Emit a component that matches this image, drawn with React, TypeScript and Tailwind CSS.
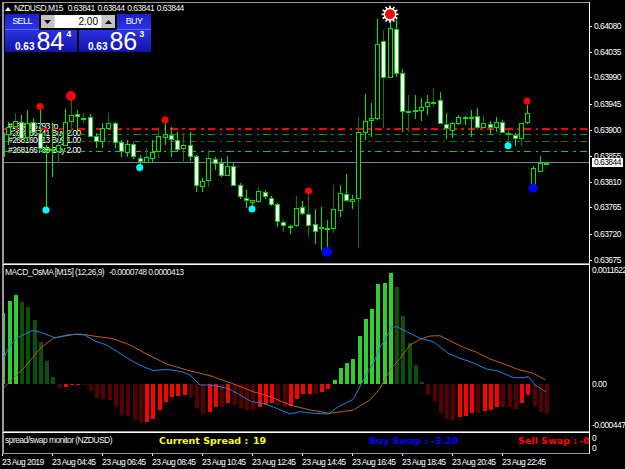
import React from "react";

type C = [number, number, number, number, number, number];
// high, low, bodyTop, bodyBottom, white body, dark wick (units: zoomed px)
const A: C[] = [
  [65,205,130,200,0,0],[95,165,110,135,0,0],[68,140,92,112,0,1],[75,150,95,148,1,0],[60,148,98,145,0,0],[85,130,95,128,1,0],
  [60,180,130,178,1,0],[165,350,175,183,1,0],[100,262,178,182,0,0],[135,220,166,185,0,1],[58,168,95,167,0,0],[30,125,76,95,0,1],
  [60,130,72,82,1,0],[68,100,84,87,0,1],[72,140,82,140,1,0],[130,175,137,155,1,0],[100,175,115,155,0,0],[68,118,100,117,0,1],
  [95,175,100,158,1,0],[150,200,155,187,1,0],[150,200,162,188,0,0],[160,208,163,200,1,0],[195,225,205,217,1,0],[175,220,202,218,0,1],
  [150,218,187,207,0,0],[110,205,138,187,0,1],[100,165,133,143,0,0],[112,200,135,150,1,0],[125,185,150,180,1,0],[130,220,165,178,0,1],
  [125,213,166,200,1,0],[195,307,198,287,1,0],[265,305,273,290,0,0],[180,290,205,273,0,1],
  [200,240,207,222,1,0],[205,262,220,258,1,0],[197,258,228,257,0,0],[215,288,228,287,1,0],[280,328,286,322,1,0],[300,353,325,334,1,0],
  [331,350,331,338,0,0],[292,338,304,335,0,1],[300,328,305,320,1,0],[318,348,324,344,1,0],[340,412,342,397,1,0],[390,425,397,407,1,1],
  [405,432,407,410,0,0],[318,410,353,407,0,1],[333,375,352,373,1,0],[305,440,373,407,1,1],[358,462,403,425,1,0],[350,480,411,418,1,0],
  [390,475,415,418,0,0],[285,430,358,418,0,1],[285,380,310,362,0,0],[252,336,313,334,1,0],[316,356,326,337,0,0],[82,473,127,327,0,1],
  [12,150,92,128,0,0],[40,140,85,94,0,0],
];
const B: C[] = [
  [58,360,132,357,0,0],[90,385,122,233,1,1],[40,235,85,233,0,0],[55,230,88,222,1,0],[207,395,220,335,1,0],[285,395,333,338,0,1],
  [285,358,330,335,0,0],[295,362,320,332,0,0],[285,345,307,320,0,0],[265,320,305,312,0,1],[275,372,300,372,1,0],[340,418,372,388,1,0],
  [365,415,370,393,0,0],[345,375,352,372,0,0],[348,375,352,355,0,0],[330,412,352,355,0,0],[325,388,348,385,1,0],[345,385,370,385,0,1],
  [363,405,373,383,1,0],[350,395,365,385,0,0],[360,400,365,398,1,0],[390,430,400,403,1,1],[400,438,405,418,1,0],[368,438,368,418,0,1],
  [315,372,338,370,0,0],[497,565,505,565,0,0],[468,515,488,515,0,0],[487,491,488,490,0,0],
];

const candles = [
  ...A.map((c) => [c[0] / 3 + 90, c[1] / 3 + 90, c[2] / 3 + 90, c[3] / 3 + 90, c[4], c[5]]),
  ...B.map((c) => [c[0] / 3, c[1] / 3, c[2] / 3, c[3] / 3, c[4], c[5]]),
];

const bars: [number, number][] = [
  [158,1],[123,1],[104,1],[125,0],[140,0],[180,0],[245,0],[302,0],[350,0],[383,0],[381,1],[373,1],[373,1],[373,0],[393,0],[414,0],[418,0],[420,0],
  [442,0],[465,0],[468,0],[480,0],[488,0],[487,1],[477,1],[449,1],[426,1],[411,1],[408,1],[405,1],[411,0],[443,0],[462,0],[455,1],[440,1],[440,0],
  [428,1],[434,0],[443,0],[450,0],[450,0],[440,1],[435,1],[428,1],[434,0],[442,0],[437,1],[417,1],[402,1],[402,1],[402,0],[395,1],[386,1],[360,1],
  [324,1],[310,1],[298,1],[228,1],[177,1],[148,1],[71,1],[69,1],[39,1],[81,0],[168,0],[250,0],[315,0],[366,0],[404,0],[425,0],[458,0],[476,0],
  [480,0],[472,1],[468,1],[460,1],[460,0],[453,1],[449,1],[440,1],[442,0],[442,0],[447,0],[428,1],[405,1],[438,0],[456,0],[462,0],
];

const blueLine = [
  [7,303],[25,265],[50,235],[75,222],[100,211],[130,220],[165,233],[195,228],[225,223],[255,225],[285,243],[320,255],[360,280],[400,305],[430,320],[460,332],[500,328],[545,335],[570,345],[600,375],
  [630,375],[660,380],[690,388],[720,405],[755,425],[790,430],[830,445],[870,462],[900,455],[940,460],[985,462],[1015,440],[1060,418],[1090,360],[1120,310],[1140,262],[1160,230],[1175,202],[1190,200],[1220,215],[1260,235],
  [1300,245],[1345,280],[1380,295],[1410,305],[1460,327],[1495,333],[1540,353],[1570,353],[1585,350],[1605,375],[1637,395],
];
const orangeLine = [
  [7,387],[40,355],[80,315],[120,265],[160,235],[205,224],[240,222],[280,228],[340,236],[390,255],[440,282],[500,312],[560,330],[630,347],
  [690,368],[760,395],[810,410],[870,435],[930,450],[990,460],[1060,450],[1110,420],[1140,385],[1170,330],[1200,295],[1230,255],[1260,238],
  [1290,228],[1320,227],[1345,240],[1390,262],[1430,277],[1470,297],[1520,315],[1550,327],[1600,340],[1637,360],
];
const pts = (l: number[][]) => l.map(([x, y]) => `${(x / 3).toFixed(1)},${(y / 3 + 260).toFixed(1)}`).join(" ");

const dots: [number, number, number, string][] = [
  [71,96,5,"#ff0000"],[40,106.6,3.5,"#ff0000"],[165,120,3.5,"#ff0000"],[308.5,191,3.5,"#ff0000"],[527,101,3.5,"#ff0000"],
  [46,210,3.5,"#00ffff"],[139.7,167.5,3.5,"#00ffff"],[252,209,3.5,"#00ffff"],[508,145.7,3.5,"#00ffff"],
  [327,251.7,5,"#0000ff"],[533,188,4.5,"#0000ff"],[390,14.3,5,"#ff0000"],
];

const levels: [number, string, number][] = [
  [128.5,"#ff0000",2],[134.5,"#1f8f1f",1],[141.5,"#1c6e1c",1],[151.5,"#2eb82e",1],
];

const priceLabels: [string, number][] = [
  ["0.64080",26],["0.64035",52],["0.63990",77],["0.63945",104],["0.63900",130],["0.63855",156],["0.63810",182],["0.63765",207],["0.63720",234],["0.63675",260],
];
const times = ["23 Aug 2019","23 Aug 04:45","23 Aug 06:45","23 Aug 08:45","23 Aug 10:45","23 Aug 12:45","23 Aug 14:45","23 Aug 16:45","23 Aug 18:45","23 Aug 20:45","23 Aug 22:45"];

const sun = Array.from({ length: 12 }, (_, i) => (i * Math.PI) / 6);

function PricePanel({ big, small, inset }: { big: string; small: string; inset: string }) {
  return (
    <div className={`w-[72px] h-[22px] flex items-start bg-gradient-to-b from-[#2a32e0] to-[#1212a8] text-white ${inset}`}>
      <span className="mt-[12px] text-[10px] leading-[10px] font-bold">0.63</span>
      <span className="ml-[2px] text-[25px] leading-[22px]">{big}</span>
      <span className="ml-[2px] text-[9px] leading-[8px] font-bold">{small}</span>
    </div>
  );
}

function TradeButton({ label }: { label: string }) {
  return (
    <div className="w-[34px] h-[16px] flex justify-center border-b border-[#5a6ae8] bg-gradient-to-b from-[#1a20c8] to-[#2a34e4] text-white text-[9px] tracking-[-0.6px] leading-[15px]">
      {label}
    </div>
  );
}

export default function App() {
  return (
    <div className="w-[625px] h-[469px] bg-black overflow-hidden flex flex-col pt-[2px] text-white font-['Liberation_Sans',sans-serif] text-[8.5px] tracking-[-0.55px]">
      {/* main chart */}
      <div className="flex h-[262px] shrink-0">
        <div className="relative ml-[2px] w-[588px] border-t border-r border-b border-l-2 border-t-[#9a9a9a] border-l-[#9a9a9a] border-r-white border-b-[#9a9a9a] overflow-hidden">
          <div className="absolute left-[4px] top-[120px] leading-[7px] whitespace-nowrap text-white">
            <div>#268166793 tp</div>
            <div>#268166741 Buy 2.00</div>
            <div>#268160013 Buy 1.00</div>
            <div className="mt-[3px]">#268166789 Buy 2.00</div>
          </div>
          <svg className="relative block" width="586" height="260" viewBox="4 3 586 260" shapeRendering="crispEdges">
            {levels.map(([y, c, w]) => (
              <line key={y} x1="3" x2="589" y1={y} y2={y} stroke={c} strokeWidth={w} strokeDasharray="7.4 4.6 2.6 4" />
            ))}
            <line x1="3" x2="589" y1="162.5" y2="162.5" stroke="#76838f" strokeWidth="1" />
            {candles.map((c, i) => {
              const x = Math.round(2 + 6.25 * i);
              const top = Math.round(c[2]);
              const h = Math.max(2, Math.round(c[3]) - top);
              return (
                <g key={i}>
                  <rect x={x} y={c[0]} width="1" height={c[1] - c[0]} fill={c[5] ? "#0b7a0b" : "#00e600"} />
                  <rect x={x - 2} y={top} width="5" height={h} fill={c[4] ? "#00d000" : "#00e600"} />
                  {h > 2 && <rect x={x - 1} y={top + 1} width="3" height={h - 2} fill={c[4] ? "#ffffff" : "#000000"} />}
                </g>
              );
            })}
            <g shapeRendering="auto">
              {sun.map((a) => (
                <line key={a} x1={390 + 5 * Math.cos(a)} y1={14.3 + 5 * Math.sin(a)} x2={390 + 8.5 * Math.cos(a)} y2={14.3 + 8.5 * Math.sin(a)} stroke="#ffffff" strokeWidth="1.6" />
              ))}
              <circle cx="390" cy="14.3" r="6.5" fill="#ffffff" />
              {dots.map(([x, y, r, c], i) => (
                <circle key={i} cx={x} cy={y} r={r} fill={c} />
              ))}
            </g>
          </svg>
          {/* title and trade panel */}
          <div className="absolute left-[1px] top-0 flex flex-col">
            <div className="flex items-center h-[11px] text-[#f4f4f4] whitespace-nowrap">
              <svg width="6" height="4" viewBox="0 0 6 4" className="mr-[3px]"><path d="M3 0 6 4H0Z" fill="#fff" /></svg>
              <span>NZDUSD,M15</span>
              <span className="ml-[5px] [word-spacing:1px]">0.63841 0.63844 0.63841 0.63844</span>
            </div>
            <div className="flex flex-col">
              <div className="flex items-start">
                <TradeButton label="SELL" />
                <div className="ml-[2px] mt-[1px] w-[74px] h-[13px] flex bg-[#d8d8d8]">
                  <div className="w-[13px] flex items-center justify-center bg-[#c4c4c4]">
                    <svg width="7" height="4" viewBox="0 0 7 4"><path d="M0 0H7L3.5 4Z" fill="#111" /></svg>
                  </div>
                  <div className="flex-1 mx-[1px] bg-white text-black text-[10px] tracking-normal leading-[13px] text-right pr-[3px]">2.00</div>
                  <div className="w-[13px] flex items-center justify-center bg-[#c4c4c4]">
                    <svg width="7" height="4" viewBox="0 0 7 4"><path d="M0 4H7L3.5 0Z" fill="#111" /></svg>
                  </div>
                </div>
                <div className="ml-[2px]"><TradeButton label="BUY" /></div>
              </div>
              <div className="flex gap-[2px] tracking-normal">
                <PricePanel big="84" small="4" inset="pl-[10px]" />
                <PricePanel big="86" small="3" inset="pl-[9px]" />
              </div>
            </div>
          </div>
        </div>
        <div className="relative flex-1">
          {priceLabels.map(([t, y]) => (
            <React.Fragment key={t}>
              <div className="absolute left-0 w-[2px] h-px bg-white" style={{ top: y - 2 }} />
              <div className="absolute left-[4px] leading-[12px]" style={{ top: y - 8 }}>{t}</div>
            </React.Fragment>
          ))}
          <div className="absolute left-[2px] top-[156px] w-[31px] h-[9px] bg-white text-black leading-[9px] pl-[2px]">0.63844</div>
        </div>
      </div>

      {/* MACD pane */}
      <div className="flex h-[168px] shrink-0">
        <div className="relative ml-[2px] w-[588px] border-t border-r border-b border-l-2 border-t-white border-l-[#9a9a9a] border-r-white border-b-[#9a9a9a] overflow-hidden">
          <div className="absolute left-[1px] top-[1px] leading-[12px] whitespace-nowrap text-[#f0f0f0]">
            MACD_OsMA [M15] (12,26,9) <span className="ml-[3px]">-0.0000748 0.0000413</span>
          </div>
          <svg className="block" width="586" height="166" viewBox="4 265 586 166">
            <g shapeRendering="crispEdges">
              {bars.map(([v, b], i) => {
                const x = Math.round(1.3 + 6.25 * i);
                const yt = 260 + v / 3;
                const pos = v < 372;
                const h = Math.max(1, Math.abs(v - 372) / 3);
                return (
                  <rect key={i} x={x} y={pos ? yt : 384} width="4" height={h}
                    fill={pos ? (b ? "#32cd32" : "#0a4f0a") : b ? "#ff0000" : "#560000"} />
                );
              })}
            </g>
            <g fill="none" strokeWidth="1">
              <polyline points={pts(orangeLine)} stroke="#bd5f12" />
              <polyline points={pts(blueLine)} stroke="#1f82e0" />
            </g>
          </svg>
        </div>
        <div className="relative flex-1">
          <div className="absolute left-[2px] top-0 leading-[12px] whitespace-nowrap">0.0011622</div>
          <div className="absolute left-[2px] top-[114px] leading-[12px]">0.00</div>
          <div className="absolute left-[2px] top-[155px] leading-[12px] whitespace-nowrap">-0.000447</div>
        </div>
      </div>

      {/* spread pane */}
      <div className="flex h-[22px] shrink-0">
        <div className="relative ml-[2px] w-[588px] border-t border-r border-b border-l-2 border-t-white border-l-[#9a9a9a] border-r-white border-b-[#9a9a9a] overflow-hidden whitespace-nowrap font-['DejaVu_Sans',sans-serif] font-bold text-[9.5px] leading-[14px] tracking-normal">
          <span className="absolute left-[1px] top-px font-['Liberation_Sans',sans-serif] font-normal text-[8.5px] tracking-[-0.55px] leading-[12px] text-[#f0f0f0]">spread/swap monitor (NZDUSD)</span>
          <span className="absolute left-[155px] top-px text-[#ffff00]">Current Spread :</span>
          <span className="absolute left-[249px] top-px text-[#ffff00]">19</span>
          <span className="absolute left-[365px] top-px text-[#0000ff]">Buy Swap :</span>
          <span className="absolute left-[427px] top-px text-[#0000ff]">-3.20</span>
          <span className="absolute left-[514px] top-px text-[#ff0000]">Sell Swap :</span>
          <span className="absolute left-[575px] top-px text-[#ff0000]">-0</span>
        </div>
        <div className="flex-1 flex flex-col pl-[2px] pt-[1px] leading-[10px]">
          <span>0</span>
          <span>0</span>
        </div>
      </div>

      {/* time axis */}
      <div className="flex h-[15px] pl-[2px]">
        {times.map((t) => (
          <div key={t} className="w-[50px] shrink-0 relative whitespace-nowrap leading-[12px] pt-[2px]">
            <div className="absolute left-0 top-0 w-px h-[2px] bg-white" />
            <span>{t}</span>
          </div>
        ))}
      </div>
    </div>
  );
}
